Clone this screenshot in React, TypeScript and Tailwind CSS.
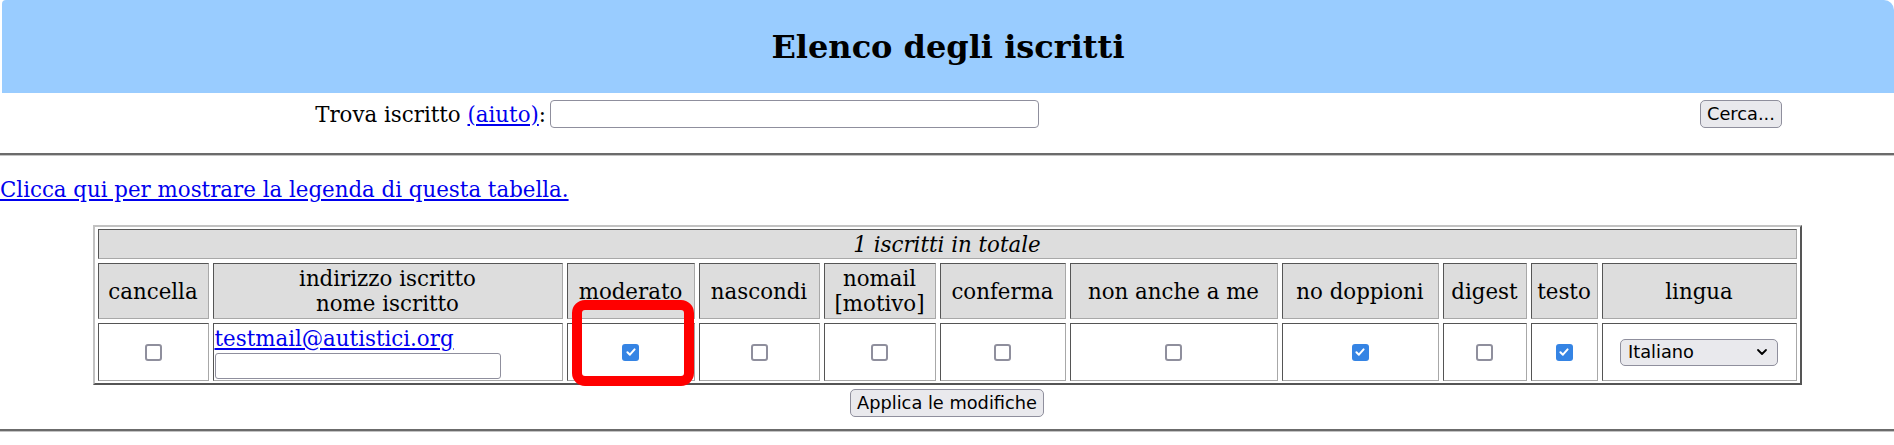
import React from "react";

const serif = "font-['DejaVu_Serif',serif]";
const sans = "font-['DejaVu_Sans',sans-serif]";

function Check({ checked }: { checked?: boolean }) {
  if (checked)
    return (
      <span className="inline-flex w-[17px] h-[17px] rounded-[3px] bg-[#3584e4] items-center justify-center">
        <svg width="12" height="12" viewBox="0 0 12 12">
          <path
            d="M2.4 6.2 L4.9 8.7 L9.6 3.4"
            fill="none"
            stroke="white"
            strokeWidth="2"
            strokeLinecap="round"
            strokeLinejoin="round"
          />
        </svg>
      </span>
    );
  return (
    <span className="inline-block w-[17px] h-[17px] rounded-[3px] border-2 border-[#8f8f9d] bg-white" />
  );
}

const cellBorder =
  "border border-t-[#555555] border-l-[#555555] border-r-[#a8a8a8] border-b-[#a8a8a8]";
const head = `${cellBorder} bg-[#dddddd] flex items-center justify-center text-center leading-[25px] h-[56px]`;
const data = `${cellBorder} bg-white flex items-center justify-center h-[58px]`;

const heads: React.ReactNode[] = [
  "cancella",
  <>
    indirizzo iscritto
    <br />
    nome iscritto
  </>,
  "moderato",
  "nascondi",
  <>
    nomail
    <br />
    [motivo]
  </>,
  "conferma",
  "non anche a me",
  "no doppioni",
  "digest",
  "testo",
  "lingua",
];

export default function App() {
  return (
    <div className={`${serif} text-[21.33px] text-black bg-white w-[1894px] h-[445px] overflow-hidden`}>
      {/* Header */}
      <div className="ml-[2px] h-[93px] bg-[#99ccff] rounded-tl-[4px] rounded-tr-[10px] flex items-center justify-center">
        <h1 className="text-[32px] font-bold leading-[38px]">Elenco degli iscritti</h1>
      </div>

      {/* Search row */}
      <div className="pt-[7px] flex items-center h-[35px]">
        <div className="w-[546px] text-right leading-[25px]">
          Trova iscritto{" "}
          <a href="#" className="text-[#0000ee] underline">
            (aiuto)
          </a>
          :
        </div>
        <input
          type="text"
          className="ml-[4px] w-[489px] h-[28px] border border-[#8f8f9d] rounded-[4px] bg-white outline-none"
        />
        <button
          className={`${sans} ml-[661px] h-[28px] px-[6px] bg-[#e9e9ed] border border-[#8f8f9d] rounded-[5px] text-[17.78px] leading-[22px] text-black`}
        >
          Cerca...
        </button>
      </div>

      <div className="mt-[25px] h-0 border-t-2 border-t-[#6b6b6b] border-b border-b-[#c4c4c4]" />

      <div className="mt-[21px] leading-[25px]">
        <a href="#" className="text-[#0000ee] underline">
          Clicca qui per mostrare la legenda di questa tabella.
        </a>
      </div>

      {/* Table */}
      <div className="relative mt-[23px] mx-auto w-[1709px] border-2 border-t-[#c2c2c2] border-l-[#c2c2c2] border-r-[#555555] border-b-[#555555] py-[2px] px-[3px]">
        <div className="grid grid-cols-[111px_350px_128px_121px_112px_126px_208px_157px_84px_67px_195px] gap-[4px]">
          <div className={`${cellBorder} col-span-11 h-[30px] bg-[#dddddd] flex items-center justify-center italic leading-[25px]`}>
            1 iscritti in totale
          </div>
          {heads.map((h, i) => (
            <div key={i} className={head}>
              <span>{h}</span>
            </div>
          ))}
          <div className={data}>
            <Check />
          </div>
          <div className={`${cellBorder} bg-white h-[58px] flex flex-col justify-center px-[1px]`}>
            <a href="#" className="text-[#0000ee] underline leading-[25px]">
              testmail@autistici.org
            </a>
            <input
              type="text"
              className="mt-[2px] w-[286px] h-[26px] border border-[#8f8f9d] rounded-[3px] bg-white outline-none"
            />
          </div>
          <div className={data}>
            <Check checked />
          </div>
          <div className={data}>
            <Check />
          </div>
          <div className={data}>
            <Check />
          </div>
          <div className={data}>
            <Check />
          </div>
          <div className={data}>
            <Check />
          </div>
          <div className={data}>
            <Check checked />
          </div>
          <div className={data}>
            <Check />
          </div>
          <div className={data}>
            <Check checked />
          </div>
          <div className={data}>
            <div
              className={`${sans} w-[158px] h-[27px] rounded-[5px] border border-[#8f8f9d] bg-[#e9e9ed] flex items-center justify-between pl-[7px] pr-[9px] text-[17.78px] leading-[22px]`}
            >
              <span>Italiano</span>
              <svg width="12" height="8" viewBox="0 0 12 8">
                <path d="M2 2 L6 6 L10 2" fill="none" stroke="black" strokeWidth="1.8" strokeLinecap="round" strokeLinejoin="round" />
              </svg>
            </div>
          </div>
        </div>
        {/* red annotation */}
        <div className="absolute left-[477px] top-[73px] w-[122px] h-[86px] border-[10px] border-[#ff0000] rounded-[13px] pointer-events-none" />
      </div>

      <div className="mt-[4px] flex justify-center">
        <button
          className={`${sans} h-[28px] px-[6px] bg-[#e9e9ed] border border-[#8f8f9d] rounded-[5px] text-[17.78px] leading-[22px] text-black`}
        >
          Applica le modifiche
        </button>
      </div>

      <div className="mt-[12px] h-0 border-t-2 border-t-[#6b6b6b] border-b border-b-[#c4c4c4]" />
    </div>
  );
}
